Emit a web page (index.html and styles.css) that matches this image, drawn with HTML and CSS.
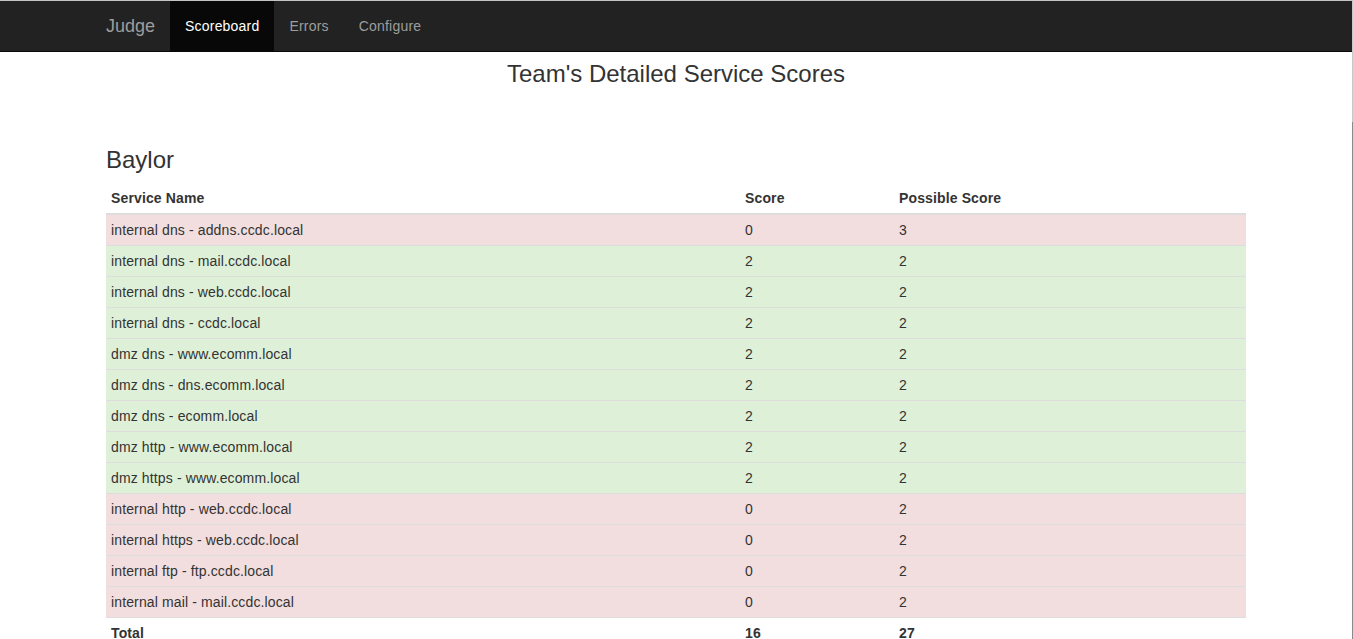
FILE: index.html
```html
<!DOCTYPE html>
<html>
<head>
<meta charset="utf-8">
<title>Judge</title>
<link rel="stylesheet" href="styles.css">
</head>
<body>
<nav class="navbar">
  <div class="container nav-inner">
    <a class="brand" href="#">Judge</a>
    <ul class="nav">
      <li class="active"><a href="#">Scoreboard</a></li>
      <li><a href="#">Errors</a></li>
      <li><a href="#">Configure</a></li>
    </ul>
  </div>
</nav>
<main class="container">
  <h3 class="page-title">Team's Detailed Service Scores</h3>
  <h3 class="team-name">Baylor</h3>
  <table class="scores">
    <thead>
      <tr><th class="c-name">Service Name</th><th class="c-score">Score</th><th class="c-poss">Possible Score</th></tr>
    </thead>
    <tbody>
      <tr class="danger"><td>internal dns - addns.ccdc.local</td><td>0</td><td>3</td></tr>
      <tr class="success"><td>internal dns - mail.ccdc.local</td><td>2</td><td>2</td></tr>
      <tr class="success"><td>internal dns - web.ccdc.local</td><td>2</td><td>2</td></tr>
      <tr class="success"><td>internal dns - ccdc.local</td><td>2</td><td>2</td></tr>
      <tr class="success"><td>dmz dns - www.ecomm.local</td><td>2</td><td>2</td></tr>
      <tr class="success"><td>dmz dns - dns.ecomm.local</td><td>2</td><td>2</td></tr>
      <tr class="success"><td>dmz dns - ecomm.local</td><td>2</td><td>2</td></tr>
      <tr class="success"><td>dmz http - www.ecomm.local</td><td>2</td><td>2</td></tr>
      <tr class="success"><td>dmz https - www.ecomm.local</td><td>2</td><td>2</td></tr>
      <tr class="danger"><td>internal http - web.ccdc.local</td><td>0</td><td>2</td></tr>
      <tr class="danger"><td>internal https - web.ccdc.local</td><td>0</td><td>2</td></tr>
      <tr class="danger"><td>internal ftp - ftp.ccdc.local</td><td>0</td><td>2</td></tr>
      <tr class="danger"><td>internal mail - mail.ccdc.local</td><td>0</td><td>2</td></tr>
      <tr class="total"><th>Total</th><th>16</th><th>27</th></tr>
    </tbody>
  </table>
</main>
<div class="scroll-track"><div class="scroll-thumb"></div></div>
</body>
</html>
```
FILE: styles.css
```css
* { box-sizing: border-box; }
html, body { margin: 0; padding: 0; }
body {
  font-family: "Liberation Sans", Arial, Helvetica, sans-serif;
  font-size: 14px;
  line-height: 1.42857143;
  color: #333;
  background: #fff;
}
.container {
  width: 1170px;
  margin: 0;
  margin-left: calc(50% - 585.5px);
  padding: 0 15px;
}
.navbar {
  background: #222;
  border-top: 1px solid #c4c4c4;
  border-bottom: 1px solid #080808;
  height: 52px;
}
.nav-inner {
  display: flex;
  height: 50px;
}
.brand {
  display: block;
  margin-left: -15px;
  padding: 15px;
  height: 50px;
  font-size: 18px;
  line-height: 20px;
  color: #9d9d9d;
  text-decoration: none;
}
.nav {
  display: flex;
  list-style: none;
  margin: 0;
  padding: 0;
}
.nav a {
  display: block;
  padding: 15px;
  line-height: 20px;
  color: #9d9d9d;
  text-decoration: none;
  letter-spacing: 0.2px;
}
.nav .active a {
  background: #080808;
  color: #fff;
}
.page-title {
  font-size: 24px;
  font-weight: 500;
  line-height: 1.1;
  text-align: center;
  margin: 9px 0 0;
}
.team-name {
  font-size: 24px;
  font-weight: 500;
  line-height: 1.1;
  margin: 60px 0 9px;
}
.scores {
  width: 100%;
  border-collapse: collapse;
  border-spacing: 0;
  margin-bottom: 20px;
  letter-spacing: 0.13px;
}
.scores th, .scores td {
  padding: 5px;
  line-height: 20px;
  text-align: left;
  vertical-align: top;
  border-top: 1px solid #ddd;
}
.scores thead th {
  border-top: 0;
  border-bottom: 2px solid #ddd;
  vertical-align: bottom;
}
.c-name { width: 634px; }
.c-score { width: 154px; }
.c-poss { width: 352px; }
.scores tr.danger td { background: #f2dede; }
.scores tr.success td { background: #dff0d8; }
.scroll-track {
  position: fixed;
  top: 0;
  right: 0;
  bottom: 0;
  width: 1px;
  background: #c8c8c8;
}
.scroll-thumb {
  position: absolute;
  left: 0;
  top: 122px;
  bottom: 0;
  width: 1px;
  background: #8a8a8a;
}
```
